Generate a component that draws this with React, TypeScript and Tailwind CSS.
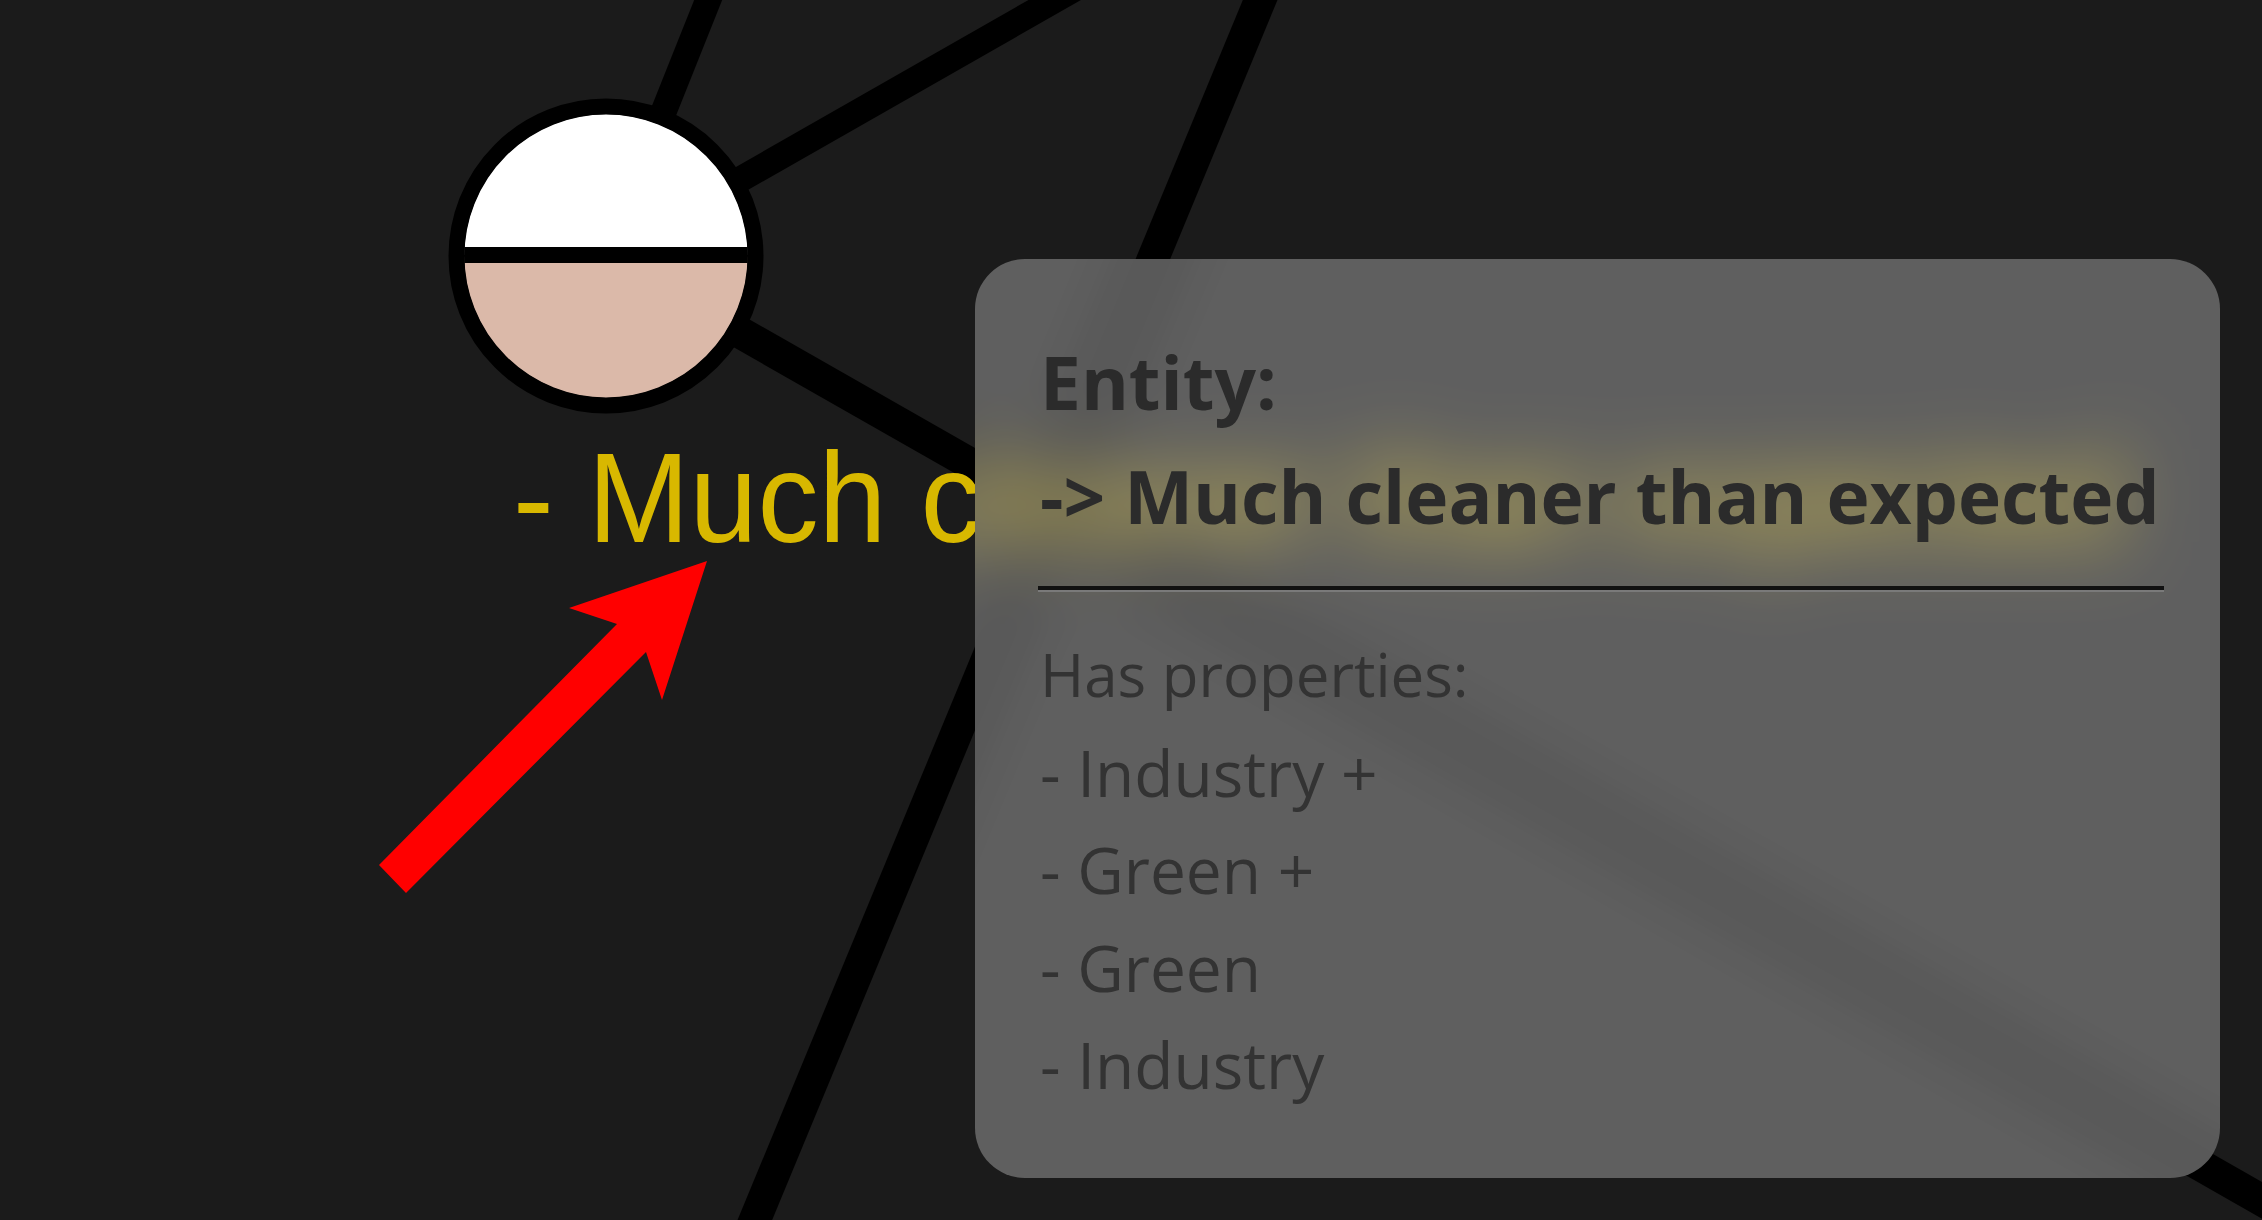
function EdgeLines() {
  return (
    <g stroke="#000" fill="none">
      <line x1="606" y1="256" x2="788" y2="-200" strokeWidth="26" />
      <line x1="606" y1="256" x2="1400" y2="-197" strokeWidth="26" />
      <line x1="606" y1="256" x2="2400" y2="1279" strokeWidth="32" />
      <line x1="1343" y1="-200" x2="672" y2="1420" strokeWidth="32" />
    </g>
  );
}

function Label({ hidden }: { hidden?: boolean }) {
  return (
    <div
      aria-hidden={hidden}
      className="absolute left-[513px] top-[434px] origin-left scale-x-[0.955] whitespace-nowrap text-[128px] leading-[128px] text-[#d8b800] font-['Liberation_Sans',Arial,sans-serif]"
    >
      - Much cleaner than expected
    </div>
  );
}

export default function App() {
  const props = ["- Industry +", "- Green +", "- Green", "- Industry"];
  return (
    <div className="relative w-[2262px] h-[1220px] overflow-hidden bg-[#1b1b1b]">
      <svg className="absolute inset-0" width="2262" height="1220" viewBox="0 0 2262 1220">
        <defs>
          <clipPath id="nodeClip">
            <circle cx="606" cy="256" r="142" />
          </clipPath>
        </defs>
        <EdgeLines />
        <g clipPath="url(#nodeClip)">
          <rect x="440" y="90" width="340" height="166" fill="#ffffff" />
          <rect x="440" y="256" width="340" height="170" fill="#dbb9a9" />
          <rect x="440" y="247" width="340" height="16" fill="#000000" />
        </g>
        <circle cx="606" cy="256" r="149.5" fill="none" stroke="#000" strokeWidth="16" />
        <polygon
          points="707,561 662,700 646,652 406,893 379,865 617,624 569,608"
          fill="#ff0000"
        />
      </svg>

      <Label />

      {/* Tooltip: frosted panel over the graph */}
      <div className="absolute left-[975px] top-[259px] w-[1245px] overflow-hidden rounded-[50px] font-['Open_Sans',sans-serif]">
        <div
          aria-hidden
          className="absolute left-[-1075px] top-[-359px] w-[2462px] h-[1420px] bg-[#1b1b1b] p-[100px] blur-[36px]"
        >
          <div className="relative w-[2262px] h-[1220px]">
            <svg
              className="absolute inset-0 overflow-visible"
              width="2262"
              height="1220"
              viewBox="0 0 2262 1220"
            >
              <EdgeLines />
            </svg>
            <Label hidden />
          </div>
        </div>
        <div className="absolute inset-0 bg-white/30" />

        <div className="relative flex flex-col pt-[66px] pb-[64px] pl-[65px] pr-[56px]">
          <div className="flex flex-col text-[73px] leading-[114px] font-bold text-[#2b2b2b] whitespace-nowrap">
            <span>Entity:</span>
            <span>-&gt; Much cleaner than expected</span>
          </div>
          <div className="-ml-[2px] mt-[33px] h-[6px] border-t-4 border-b-2 border-t-[#111111] border-b-[#7a7a7a]" />
          <div className="mt-[34px] flex flex-col text-[64px] leading-[97.5px] text-[#333333] whitespace-nowrap">
            <span className="text-[60px]">Has properties:</span>
            {props.map((p) => (
              <span key={p}>{p}</span>
            ))}
          </div>
        </div>
      </div>
    </div>
  );
}
